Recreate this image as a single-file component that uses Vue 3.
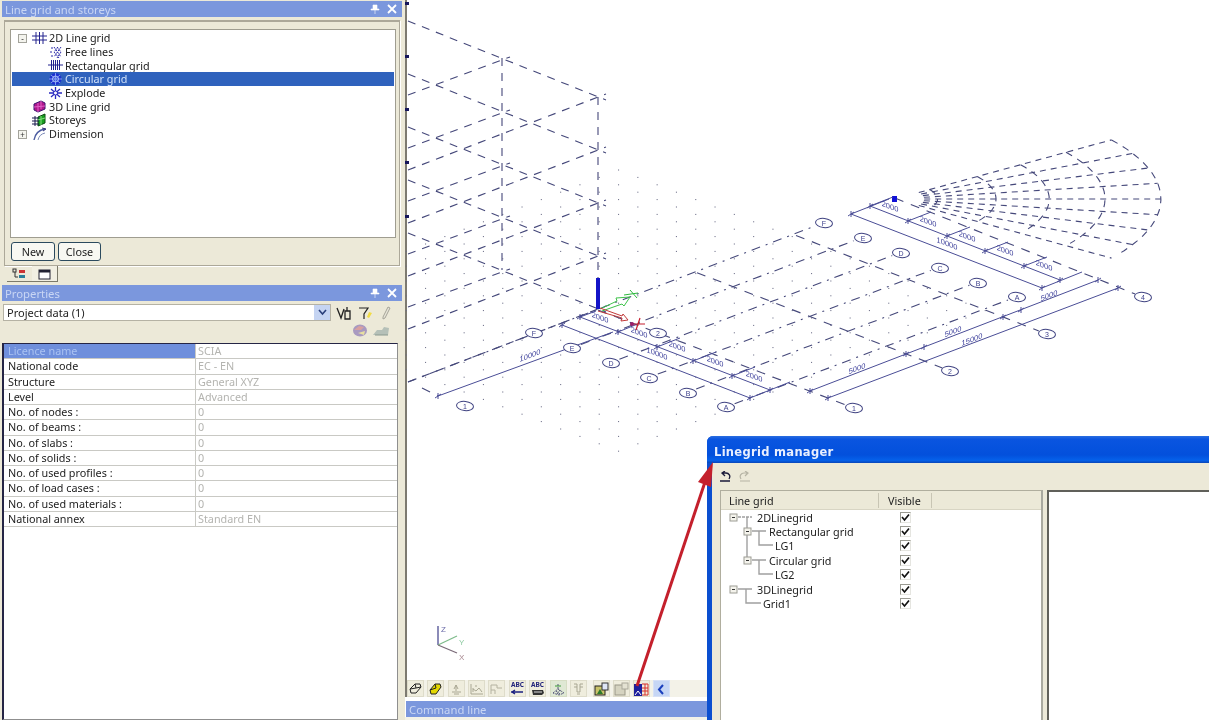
<script setup>
const slope = 0.383

const treeItems = [
  { label: '2D Line grid', icon: 'grid2d', level: 0, toggle: '-' },
  { label: 'Free lines', icon: 'free', level: 1 },
  { label: 'Rectangular grid', icon: 'rect', level: 1 },
  { label: 'Circular grid', icon: 'circ', level: 1, selected: true },
  { label: 'Explode', icon: 'explode', level: 1 },
  { label: '3D Line grid', icon: 'grid3d', level: 0 },
  { label: 'Storeys', icon: 'storeys', level: 0 },
  { label: 'Dimension', icon: 'dim', level: 0, toggle: '+' }
]

const icons = {
  grid2d: '<path d="M4 1v12M7.5 1v12M11 1v12M0 5h15M0 9h15" stroke="#23238e" fill="none"/>',
  free: '<path d="M2 7h2M3 3h2M3 11h2M6 2l7 10M9 2l4 5M6 7l5 6M13 2L6 12M10 2L6 7M13 7l-4 6" stroke="#2a2aa8" stroke-dasharray="2 1" fill="none"/>',
  rect: '<path d="M3.5 2v10M5.5 2v10M7.5 2v10M9.5 2v10M11.5 2v10M0 7h15" stroke="#23238e" stroke-width="1" fill="none"/>',
  circ: '<circle cx="7.5" cy="7" r="6" fill="#1c2fd0"/><path d="M1 7h13M7.5 1v12M3 3l9 8M12 3l-9 8" stroke="#7d9bf0"/><circle cx="7.5" cy="7" r="3" fill="none" stroke="#a9c0f8"/>',
  explode: '<path d="M7.5 1v12M1 7h13M3 3l9 8M12 3l-9 8" stroke="#2a2ac0" stroke-width="1.3"/><circle cx="7.5" cy="7" r="2" fill="#fff" stroke="#2a2ac0"/>',
  grid3d: '<path d="M2 5l7-3 4 2v6l-7 3-4-2z" fill="#b0168c" stroke="#3c1670"/><path d="M6 4v9M2 8l11-1M9 2v8" stroke="#e060c8"/>',
  storeys: '<path d="M6 4l7-3v9l-7 3z" fill="#18a020" stroke="#0a4a10"/><path d="M9 3v9M6 7l7-2" stroke="#86e080"/><path d="M0 5h7M0 8h7M0 11h7M3 3v10" stroke="#16164a" fill="none"/>',
  dim: '<path d="M2 13C3 7 7 3 13 2" stroke="#4b5ba0" stroke-width="1.4" fill="none"/><path d="M6 13C7 9 9 7 13 6" stroke="#7d8ab8" fill="none"/><path d="M10 1l4 1-3 2" fill="none" stroke="#30307a"/>'
}

const tools = [
  { body: '<path d="M3 11l-1-4 5-5h5l1 3-5 6zM7 2l1 4-6 1M8 6l5-1" fill="none" stroke="#222"/>' },
  { body: '<path d="M3 12l-1-4 5-6h5l1 3-5 7z" fill="#e4d800" stroke="#222"/><path d="M7 2l1 4-6 2" fill="none" stroke="#222"/>' },
  { dim: true, gap: 'sep', body: '<path d="M7 3v6M3 10h9M5 12h5M5 7l2-4 2 4" fill="none" stroke="#a9a793"/>' },
  { dim: true, body: '<path d="M2 2v10h12M4 10V6M4 7l3 2 3-3 3 4M6 4h2" fill="none" stroke="#a9a793"/>' },
  { dim: true, body: '<path d="M2 12V3h6v3h5M2 8h4v4" fill="none" stroke="#b4b2a0"/>' },
  { gap: 'sep', text: 'ABC', body: '<path d="M1 10h12M5 8l-3 2 3 2" fill="none" stroke="#1b2080" stroke-width="1.4"/>' },
  { text: 'ABC', body: '<path d="M2 8h11l1 3-2 2H3z" fill="#333"/><path d="M4 10h8" stroke="#ddd"/>' },
  { on: true, gap: 'sep', body: '<path d="M2 11l5-4 6 4-5 2zM7 2v5M5 9l4 3M9 8l-3 4" fill="none" stroke="#55577a" stroke-dasharray="2 1"/><path d="M4 4h6" stroke="#3a9a3a"/>' },
  { dim: true, body: '<path d="M3 2h3v8h3V2h3M3 5h3M9 5h3M6 12h3" fill="none" stroke="#a9a793"/>' },
  { gap: 'wide', body: '<rect x="1" y="4" width="10" height="9" fill="#c9c26a" stroke="#222"/><rect x="8" y="1" width="6" height="7" fill="#dfe6f6" stroke="#333"/><path d="M3 12l3-5 3 5z" fill="#2c7a2c"/>' },
  { dim: true, body: '<rect x="1" y="3" width="10" height="10" fill="#d5d3c0" stroke="#9a9888"/><rect x="8" y="1" width="6" height="6" fill="#e4e2d2" stroke="#aaa89a"/>' },
  { body: '<rect x="0" y="2" width="8" height="12" fill="#1d1f9c"/><path d="M8 2h6v11H8M8 6h6M8 9h6M11 2v11" fill="none" stroke="#d8302a"/><path d="M1 13l3-4 3 4" fill="none" stroke="#fff"/>' },
  { back: true, body: '<path d="M9 3L5 7.5 9 12" fill="none" stroke="#1a3fbd" stroke-width="2"/>' }
]

const propRows = [
  ['Licence name', 'SCIA'],
  ['National code', 'EC - EN'],
  ['Structure', 'General XYZ'],
  ['Level', 'Advanced'],
  ['No. of nodes :', '0'],
  ['No. of beams :', '0'],
  ['No. of slabs :', '0'],
  ['No. of solids :', '0'],
  ['No. of used profiles :', '0'],
  ['No. of load cases :', '0'],
  ['No. of used materials :', '0'],
  ['National annex', 'Standard EN']
]

const gridRows = [
  { label: '2DLinegrid', x: 36 },
  { label: 'Rectangular grid', x: 48 },
  { label: 'LG1', x: 54 },
  { label: 'Circular grid', x: 48 },
  { label: 'LG2', x: 54 },
  { label: '3DLinegrid', x: 36 },
  { label: 'Grid1', x: 42 }
]

// point grid of the working plane
let dotPath = ''
for (let a = 0; a < 20; a++) {
  for (let b = 0; b < 20; b++) {
    const x = 618 + (a - b) * 19.3
    const y = 170 + (a + b) * 7.4
    dotPath += `M${x.toFixed(1)} ${y.toFixed(1)}h1.1`
  }
}

// storey frames above the plane
const frameLines = []
for (let k = 0; k < 5; k++) {
  const dz = 53 * k
  frameLines.push([408, 21 + dz, 606, 100 + dz])
  frameLines.push([408, 95 + dz, 510, 57 + dz])
  frameLines.push([408, 170 + dz, 606, 94 + dz])
}
frameLines.push([502, 58, 502, 270], [598, 97, 598, 278])

// plan lines
const rowLines = [[408, 382, 815, 226]]
for (let i = 1; i < 6; i++) {
  rowLines.push([
    581 + 38.4 * (i - 1), 344.5 + 14.8 * (i - 1),
    815 + 38.6 * i, 226 + 14.8 * i
  ])
}
const colLines = [[422, 388, 438, 396], [598, 310, 846, 405]]
for (let j = 1; j < 4; j++) {
  colLines.push([598 + 99 * j, 310 - 37.3 * j, 846 + 96.4 * j, 405 - 37 * j])
}

// circular part, an ellipse round the centre of the fan
const cx = 895
const cy = 199
const polar = (r, deg) => {
  const t = (deg * Math.PI) / 180
  const u = Math.cos(t)
  const v = Math.sin(t)
  return [cx + 188 * r * (u + v), cy + 188 * slope * r * (v - u)]
}
const radials = []
for (let n = 0; n < 9; n++) {
  const deg = 9.5 + n * 8.875
  const p = polar(0.11, deg)
  const q = polar(1, deg)
  radials.push(`M${p[0].toFixed(1)} ${p[1].toFixed(1)}L${q[0].toFixed(1)} ${q[1].toFixed(1)}`)
}
const arcs = [0.16, 0.38, 0.58, 0.79, 1].map((r) => {
  let d = ''
  for (let deg = 9.5; deg <= 80.6; deg += 3) {
    const p = polar(r, deg)
    d += `${d ? 'L' : 'M'}${p[0].toFixed(1)} ${p[1].toFixed(1)}`
  }
  return d
})

const dimLines = [
  [580, 317, 770, 390], [562, 325, 750, 398], [438, 396, 613, 332],
  [750, 398, 790, 382],
  [580, 317, 596, 311], [618, 332, 640, 323], [657, 347, 680, 338],
  [693, 361, 716, 352], [732, 376, 755, 367],
  [870, 206, 1060, 280], [851, 214, 1042, 288],
  [851, 214, 889, 199], [870, 206, 893, 197],
  [908, 221, 931, 212], [947, 236, 970, 227], [985, 251, 1008, 242], [1024, 266, 1047, 257],
  [1042, 288, 1082, 272],
  [810, 391, 1098, 280], [828, 398, 1118, 288]
]

const tickPoints = [
  [580, 317], [618, 332], [657, 347], [693, 361], [732, 376], [770, 390], [562, 325], [750, 398],
  [438, 396], [870, 206], [908, 221], [947, 236], [985, 251], [1024, 266], [1060, 280],
  [851, 214], [1042, 288], [810, 391], [906, 354], [1003, 317], [1098, 280], [828, 398], [1118, 288],
  [924, 347], [1021, 310]
]

const labelsDown = [
  ['2000', 600, 320], ['2000', 639, 335], ['2000', 677, 349], ['2000', 715, 364], ['2000', 754, 379],
  ['10000', 657, 356],
  ['2000', 890, 209], ['2000', 928, 224], ['2000', 967, 239], ['2000', 1005, 253], ['2000', 1044, 268],
  ['10000', 947, 246]
]

const labelsUp = [
  ['10000', 530, 358],
  ['5000', 857, 371], ['5000', 953, 334], ['5000', 1049, 298],
  ['15000', 972, 342]
]

const bubbles = [
  ['1', 465, 406], ['2', 658, 333],
  ['F', 534, 333], ['E', 572, 348], ['D', 611, 363], ['C', 649, 378], ['B', 688, 393], ['A', 726, 407],
  ['F', 824, 223], ['E', 863, 238], ['D', 901, 253], ['C', 940, 268], ['B', 978, 283], ['A', 1017, 297],
  ['1', 854, 408], ['2', 950, 371], ['3', 1047, 334], ['4', 1143, 297]
]

const edgeMarks = [2, 55, 108, 161, 215]
</script>

<template>
  <div class="app">
    <aside class="side">
      <div class="title-bar first">
        <span>Line grid and storeys</span>
        <span class="title-icons">
          <svg width="10" height="10" viewBox="0 0 10 10"><path d="M3 1h4v4h2v1H1V5h2zM5 6v4" fill="#fff" stroke="#fff" stroke-width=".6"/></svg>
          <svg width="10" height="10" viewBox="0 0 10 10"><path d="M1 1l8 8M9 1L1 9" stroke="#fff" stroke-width="1.8"/></svg>
        </span>
      </div>

      <div class="group">
        <div class="tree">
          <div
            v-for="item in treeItems"
            :key="item.label"
            class="tree-row"
            :class="[{ selected: item.selected }, 'level' + item.level]"
          >
            <span v-if="item.toggle" class="toggle">{{ item.toggle }}</span>
            <svg class="tree-icon" width="15" height="14" viewBox="0 0 15 14" v-html="icons[item.icon]"></svg>
            <span class="tree-label">{{ item.label }}</span>
          </div>
        </div>
        <div class="group-buttons">
          <button class="xp-btn new">New</button>
          <button class="xp-btn close">Close</button>
        </div>
      </div>

      <div class="tabs">
        <div class="tab">
          <svg width="15" height="12" viewBox="0 0 15 12"><rect x="1" y="1" width="3" height="3" fill="none" stroke="#333"/><path d="M3 4v5h3" fill="none" stroke="#333"/><rect x="7" y="2" width="6" height="3" fill="#c33"/><rect x="7" y="7" width="6" height="3" fill="#297f9b"/></svg>
        </div>
        <div class="tab active">
          <svg width="13" height="12" viewBox="0 0 13 12"><rect x="1" y="2" width="11" height="9" fill="#fff" stroke="#223"/><rect x="1" y="2" width="11" height="2.5" fill="#223"/></svg>
        </div>
      </div>

      <div class="title-bar second">
        <span>Properties</span>
        <span class="title-icons">
          <svg width="10" height="10" viewBox="0 0 10 10"><path d="M3 1h4v4h2v1H1V5h2zM5 6v4" fill="#fff" stroke="#fff" stroke-width=".6"/></svg>
          <svg width="10" height="10" viewBox="0 0 10 10"><path d="M1 1l8 8M9 1L1 9" stroke="#fff" stroke-width="1.8"/></svg>
        </span>
      </div>

      <div class="combo-row">
        <div class="combo">
          <span>Project data (1)</span>
          <span class="combo-arrow">
            <svg width="9" height="7" viewBox="0 0 9 7"><path d="M1 1l3.5 4L8 1" fill="none" stroke="#2a3f7a" stroke-width="1.6"/></svg>
          </span>
        </div>
        <svg width="16" height="14" viewBox="0 0 16 14"><path d="M1 2l4 10 3-9M9 5h5v8H9zM11 1v4" fill="none" stroke="#222" stroke-width="1.3"/></svg>
        <svg width="16" height="14" viewBox="0 0 16 14"><path d="M1 2h9L6 8v5" fill="none" stroke="#222" stroke-width="1.2"/><path d="M11 6l3 1-3 5-2-1z" fill="#f1dc45"/></svg>
        <svg width="12" height="14" viewBox="0 0 12 14"><path d="M8 1l2 1-5 10-2 1v-2z" fill="#e8e6d8" stroke="#a6a498"/></svg>
      </div>
      <div class="icon-row">
        <svg width="16" height="13" viewBox="0 0 16 13"><ellipse cx="8" cy="6.5" rx="7" ry="6" fill="#a89ac0"/><path d="M2 6l5-4 5 1-3 3z" fill="#d9a0a0"/><path d="M6 9l7-2-1 4z" fill="#e8e0a0"/></svg>
        <svg width="18" height="13" viewBox="0 0 18 13"><path d="M1 11l4-5h5l2-3 5 1-1 7z" fill="#b5c0b8"/><path d="M3 11h13" stroke="#8a9a90"/></svg>
      </div>

      <div class="props">
        <div
          v-for="(row, idx) in propRows"
          :key="row[0]"
          class="prop-row"
          :class="{ current: idx === 0 }"
        >
          <div class="prop-name">{{ row[0] }}</div>
          <div class="prop-value">{{ row[1] }}</div>
        </div>
      </div>
    </aside>

    <main class="main">
      <svg class="drawing" width="804" height="680" viewBox="405 0 804 680">
        <path :d="dotPath" stroke="#6a6c86" stroke-width="1" fill="none" />
        <g stroke="#45487a" fill="none" stroke-width="1.1">
          <line
            v-for="(l, i) in frameLines"
            :key="'f' + i"
            :x1="l[0]" :y1="l[1]" :x2="l[2]" :y2="l[3]"
            stroke-dasharray="8 7"
          />
          <line
            v-for="(l, i) in rowLines"
            :key="'r' + i"
            :x1="l[0]" :y1="l[1]" :x2="l[2]" :y2="l[3]"
            stroke-dasharray="9 6 2 6"
          />
          <line
            v-for="(l, i) in colLines"
            :key="'c' + i"
            :x1="l[0]" :y1="l[1]" :x2="l[2]" :y2="l[3]"
            stroke-dasharray="9 8"
          />
          <path v-for="(d, i) in radials" :key="'s' + i" :d="d" stroke-dasharray="6 5" />
          <path v-for="(d, i) in arcs" :key="'a' + i" :d="d" stroke-dasharray="7 6" />
        </g>
        <rect x="892" y="196" width="5" height="6" fill="#1010d8" />
        <rect v-for="y in edgeMarks" :key="y" x="405" :y="y" width="4" height="3" fill="#16165c" />

        <g stroke="#4a4d96" stroke-width="1">
          <line
            v-for="(l, i) in dimLines"
            :key="'d' + i"
            :x1="l[0]" :y1="l[1]" :x2="l[2]" :y2="l[3]"
          />
          <path
            v-for="(t, i) in tickPoints"
            :key="'t' + i"
            :d="`M${t[0] - 3} ${t[1] + 2}l6 -4M${t[0]} ${t[1] - 3}v6`"
          />
        </g>

        <g class="dim-text">
          <text
            v-for="(t, i) in labelsDown"
            :key="'ld' + i"
            :transform="`matrix(1 ${slope} 0 1 ${t[1]} ${t[2]})`"
            text-anchor="middle"
          >{{ t[0] }}</text>
          <text
            v-for="(t, i) in labelsUp"
            :key="'lu' + i"
            :transform="`matrix(1 ${-slope} 0 1 ${t[1]} ${t[2]})`"
            text-anchor="middle"
          >{{ t[0] }}</text>
        </g>

        <g v-for="(b, i) in bubbles" :key="'b' + i">
          <ellipse :cx="b[1]" :cy="b[2]" rx="8.5" ry="4.6" fill="#fff" stroke="#3e4180" :transform="`rotate(6 ${b[1]} ${b[2]})`" />
          <text class="bubble-text" :x="b[1]" :y="b[2] + 2.5" text-anchor="middle">{{ b[0] }}</text>
        </g>

        <!-- local axes at the origin -->
        <path d="M598 278v31" stroke="#1414c8" stroke-width="4" />
        <path d="M600 309l17-8-1-3 14-1-6 9-2-2-20 7" fill="none" stroke="#3ec24a" />
        <path d="M624 295l14-2M630 290l7 8" stroke="#2eb83e" fill="none" />
        <path d="M598 311l24 7-1 3 7-1-5-6-1 2-22-8" fill="none" stroke="#c23a3a" />
        <path d="M630 324h15M640 318l-4 12" stroke="#c61e2e" stroke-width="1.2" fill="none" />
        <circle cx="632" cy="324" r="2" fill="#9a1e6a" />

        <!-- global axes -->
        <path d="M438 626v19" stroke="#5a5a9a" stroke-width="1.4" />
        <path d="M438 645l19-9" stroke="#7dbb8a" stroke-width="1.2" />
        <path d="M438 645l19 8" stroke="#7a6a78" stroke-width="1.2" />
        <text class="axis-text" x="441" y="632" fill="#6a6aa8">Z</text>
        <text class="axis-text" x="459" y="645" fill="#8ccaa0">Y</text>
        <text class="axis-text" x="459" y="660" fill="#a88890">X</text>
      </svg>

      <div class="toolbar">
        <span
          v-for="(tool, i) in tools"
          :key="i"
          class="tool"
          :class="[tool.gap, { on: tool.on, back: tool.back, dim: tool.dim }]"
        >
          <b v-if="tool.text" class="tool-text">{{ tool.text }}</b>
          <svg width="15" height="14" viewBox="0 0 15 14" v-html="tool.body"></svg>
        </span>
      </div>
      <div class="title-bar cmd"><span>Command line</span></div>
      <div class="cmd-foot"></div>
    </main>

    <section class="manager">
      <header class="manager-title">Linegrid manager</header>
      <div class="manager-tools">
        <svg width="14" height="12" viewBox="0 0 14 12"><path d="M11 8c2-3 0-6-3-6H5M7 0L4 2l3 3M2 10h10" fill="none" stroke="#1a1a3a" stroke-width="1.3"/></svg>
        <svg width="14" height="12" viewBox="0 0 14 12"><path d="M3 8C1 5 3 2 6 2h3M7 0l3 2-3 3M2 10h10" fill="none" stroke="#b6b4a4" stroke-width="1.2"/></svg>
      </div>
      <div class="manager-body">
        <div class="grid-panel">
          <div class="grid-head">
            <span class="head-name">Line grid</span>
            <span class="head-visible">Visible</span>
          </div>
          <div class="grid-rows">
            <svg class="tree-lines" width="160" height="120" viewBox="721 511 160 120">
              <g stroke="#a0a0a0" stroke-width="1.4" fill="none">
                <path d="M738 518h14" stroke-dasharray="3 1" />
                <path d="M747 518v43" />
                <path d="M752 532h14M759 532v14h14" />
                <path d="M752 561h14M759 561v14h14" />
                <path d="M738 590h14M746 590v14h15" />
              </g>
              <g fill="#f4f3ec" stroke="#9c9c94">
                <rect x="730" y="515" width="7" height="7" />
                <rect x="744" y="529" width="7" height="7" />
                <rect x="744" y="558" width="7" height="7" />
                <rect x="730" y="587" width="7" height="7" />
              </g>
              <path d="M732 518.5h3M746 532.5h3M746 561.5h3M732 590.5h3" stroke="#333" />
            </svg>
            <div v-for="row in gridRows" :key="row.label" class="grid-row">
              <span class="grid-label" :style="{ paddingLeft: row.x + 'px' }">{{ row.label }}</span>
              <span class="check">
                <svg width="9" height="9" viewBox="0 0 9 9"><path d="M1 4l2.5 3L8 1.5" fill="none" stroke="#111" stroke-width="1.7"/></svg>
              </span>
            </div>
          </div>
        </div>
        <div class="preview"></div>
      </div>
    </section>

    <svg class="arrow" width="1209" height="720" viewBox="0 0 1209 720">
      <path d="M637 686L705 482" stroke="#c4202c" stroke-width="3" />
      <path d="M713 462l-2 25-13-5z" fill="#c4202c" />
    </svg>
  </div>
</template>

<style>
html,
body {
  margin: 0;
  background: #fff;
}
</style>

<style scoped>
.app {
  position: relative;
  display: flex;
  width: 1209px;
  height: 720px;
  overflow: hidden;
  background: #fff;
  font-family: "Noto Sans", "Liberation Sans", sans-serif;
  font-size: 10.8px;
  color: #222;
  filter: blur(0.3px);
}

.side {
  flex: none;
  display: flex;
  flex-direction: column;
  width: 405px;
  background: #ece9d8;
}

.title-bar {
  display: flex;
  flex: none;
  align-items: center;
  justify-content: space-between;
  height: 16px;
  padding: 0 5px 0 3px;
  background: #7b97dd;
  color: #c9d6f4;
  font-size: 11.3px;
}

.title-bar.first {
  margin: 1px 3px 0 2px;
}

.title-bar.second {
  margin: 3px 3px 0 2px;
}

.title-icons {
  display: flex;
  gap: 7px;
}

.group {
  flex: none;
  box-sizing: border-box;
  height: 246px;
  margin: 3px 5px 0 4px;
  padding: 7px 3px 0 5px;
  border: 1px solid #aca899;
  border-top-width: 2px;
  box-shadow: 1px 1px 0 #fff;
}

.tree {
  box-sizing: border-box;
  height: 209px;
  padding: 1px 1px;
  border: 1px solid #9f9d90;
  background: #fff;
}

.tree-row {
  position: relative;
  display: flex;
  align-items: center;
  height: 13.7px;
}

.tree-row.level0 {
  padding-left: 20px;
}

.tree-row.level1 {
  padding-left: 36px;
}

.tree-row.selected {
  background: #2f62bd;
  color: #cfe0f8;
}

.tree-label {
  margin-left: 2px;
  white-space: nowrap;
}

.toggle {
  position: absolute;
  left: 6px;
  top: 3px;
  width: 7px;
  height: 7px;
  border: 1px solid #a3a39b;
  background: #f4f4ee;
  color: #333;
  font-size: 8px;
  line-height: 7px;
  text-align: center;
}

.group-buttons {
  display: flex;
  gap: 3px;
  margin: 4px 0 0 1px;
}

.xp-btn {
  height: 19px;
  padding: 0;
  border: 1px solid #2b4a5e;
  border-radius: 3px;
  background: #f8f8f2;
  color: #222;
  font: inherit;
}

.xp-btn.new {
  width: 44px;
}

.xp-btn.close {
  width: 43px;
}

.tabs {
  display: flex;
  flex: none;
  height: 16px;
  margin-left: 7px;
}

.tab {
  display: flex;
  align-items: center;
  justify-content: center;
  width: 25px;
  border-bottom: 1px solid #7c7a6a;
}

.tab.active {
  border-right: 1px solid #7c7a6a;
  border-bottom: 1px solid #7c7a6a;
  background: #f1efe2;
}

.combo-row {
  display: flex;
  flex: none;
  align-items: center;
  gap: 6px;
  height: 17px;
  margin: 3px 0 0 3px;
}

.combo {
  display: flex;
  align-items: center;
  justify-content: space-between;
  box-sizing: border-box;
  width: 328px;
  height: 17px;
  margin-right: -1px;
  padding-left: 3px;
  border: 1px solid #b5b2a4;
  background: #fff;
  font-size: 11px;
}

.combo-arrow {
  display: flex;
  align-items: center;
  justify-content: center;
  width: 16px;
  height: 15px;
  background: #c5d4f2;
}

.icon-row {
  display: flex;
  flex: none;
  justify-content: flex-end;
  gap: 4px;
  box-sizing: border-box;
  height: 18px;
  margin-bottom: 4px;
  padding: 3px 15px 0 0;
}

.props {
  flex: 1;
  box-sizing: border-box;
  margin: 0 7px 0 2px;
  border: 1px solid #8f8f8f;
  border-top: 1px solid #252545;
  border-left: 2px solid #252545;
  background: #fff;
}

.prop-row {
  display: flex;
  box-sizing: border-box;
  height: 15.27px;
  border-bottom: 1px solid #c9c9c4;
  line-height: 14px;
}

.prop-name {
  box-sizing: border-box;
  width: 192px;
  padding-left: 4px;
  border-right: 1px solid #c9c9c4;
  white-space: nowrap;
}

.prop-value {
  padding-left: 2px;
  color: #b4b4b0;
  white-space: nowrap;
}

.prop-row.current .prop-name {
  background: #6f8fdc;
  color: #aac2f2;
}

.main {
  flex: 1;
  display: flex;
  flex-direction: column;
  min-width: 0;
}

.drawing {
  display: block;
  flex: none;
  box-shadow: inset 2px 0 0 #7d7a70;
}

.toolbar {
  display: flex;
  flex: none;
  align-items: center;
  gap: 3px;
  box-sizing: border-box;
  height: 17px;
  padding-left: 2px;
  background: #f3f2e8;
  box-shadow: inset 2px 0 0 #7d7a70;
}

.tool {
  position: relative;
  display: flex;
  flex: none;
  align-items: center;
  justify-content: center;
  box-sizing: border-box;
  width: 17px;
  height: 17px;
  border: 1px solid #dedcca;
  background: #efeddd;
}

.tool.sep {
  margin-left: 1px;
}

.tool.wide {
  margin-left: 3px;
}

.tool.on {
  border-color: #d6ddc4;
  background: #dfe8d4;
}

.tool.back {
  border-color: #d6e0f6;
  background: #c6d6f5;
}

.tool-text {
  position: absolute;
  top: 0;
  left: 0;
  width: 100%;
  color: #20227a;
  font-size: 6.5px;
  line-height: 8px;
  text-align: center;
}

.title-bar.cmd {
  width: 301px;
  margin: 4px 0 0 1px;
}

.cmd-foot {
  flex: 1;
  background: #f3f2e8;
}

.manager {
  position: absolute;
  top: 436px;
  left: 707px;
  display: flex;
  flex-direction: column;
  box-sizing: border-box;
  width: 502px;
  height: 284px;
  border-left: 5px solid #0b4fd0;
  border-radius: 6px 0 0 0;
  background: #ece9d8;
}

.manager-title {
  flex: none;
  box-sizing: border-box;
  height: 27px;
  margin-left: -5px;
  padding: 9px 0 0 7px;
  border-radius: 6px 0 0 0;
  background: linear-gradient(#2a6ee0 0, #0a55e0 12%, #0350dc 70%, #0561ea 90%, #0a46b8 100%);
  color: #e8f0ff;
  font-family: "DejaVu Sans", sans-serif;
  font-size: 11.5px;
  font-weight: 700;
  letter-spacing: 0.3px;
}

.manager-tools {
  display: flex;
  flex: none;
  align-items: center;
  gap: 6px;
  box-sizing: border-box;
  height: 27px;
  padding-left: 6px;
}

.manager-body {
  flex: 1;
  display: flex;
  gap: 4px;
  min-height: 0;
  padding-left: 8px;
}

.grid-panel {
  display: flex;
  flex-direction: column;
  box-sizing: border-box;
  width: 323px;
  border: 1px solid #b0ae9e;
  border-right: 2px solid #a9a99f;
  border-bottom: 0;
  background: #fff;
}

.grid-head {
  display: flex;
  flex: none;
  align-items: center;
  height: 18px;
  border-bottom: 1px solid #d8d5c4;
  background: #ece9d8;
}

.head-name {
  box-sizing: border-box;
  width: 158px;
  padding-left: 8px;
  border-right: 1px solid #c8c5b4;
}

.head-visible {
  box-sizing: border-box;
  width: 53px;
  padding-left: 9px;
  border-right: 1px solid #c8c5b4;
}

.grid-rows {
  position: relative;
  flex: 1;
}

.tree-lines {
  position: absolute;
  top: 0;
  left: 0;
}

.grid-row {
  position: relative;
  display: flex;
  align-items: center;
  height: 14.4px;
}

.grid-label {
  box-sizing: border-box;
  width: 179px;
  white-space: nowrap;
}

.check {
  display: flex;
  align-items: center;
  justify-content: center;
  box-sizing: border-box;
  width: 11px;
  height: 11px;
  border: 1px solid #9a9a92;
  border-right-color: #e5e5e0;
  border-bottom-color: #e5e5e0;
  background: #fff;
}

.preview {
  flex: 1;
  border-top: 2px solid #60605a;
  border-left: 2px solid #60605a;
  background: #fff;
}

.arrow {
  position: absolute;
  top: 0;
  left: 0;
  pointer-events: none;
}

.dim-text text {
  fill: #3a3d9a;
  font-family: "Liberation Sans", sans-serif;
  font-size: 7.5px;
}

.bubble-text {
  fill: #3a3d8a;
  font-family: "Liberation Sans", sans-serif;
  font-size: 7px;
}

.axis-text {
  font-family: "Liberation Sans", sans-serif;
  font-size: 8px;
}
</style>
